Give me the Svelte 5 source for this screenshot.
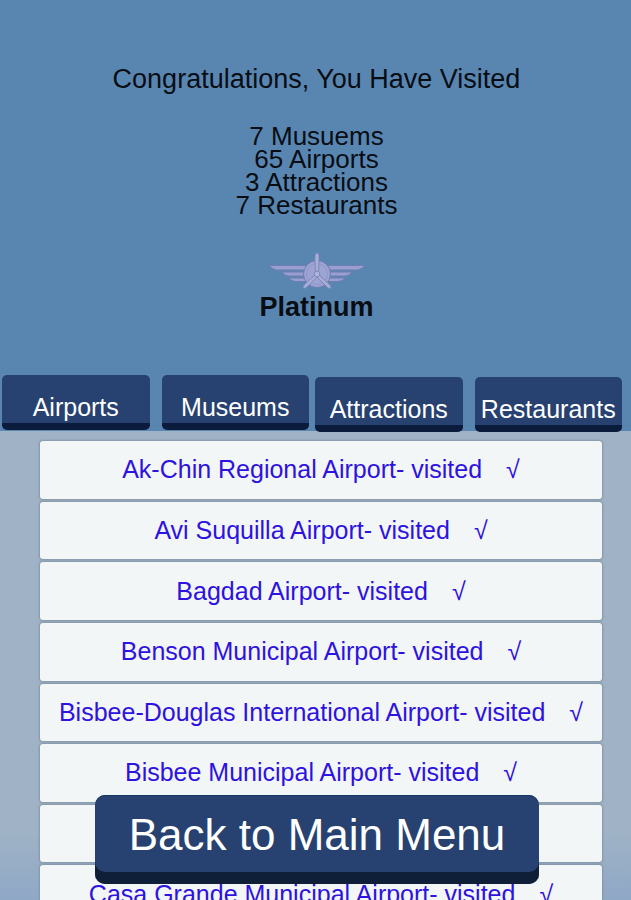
<script>
  const totals = ['7 Musuems', '65 Airports', '3 Attractions', '7 Restaurants'];
  const tabGroups = [
    ['Airports', 'Museums'],
    ['Attractions', 'Restaurants']
  ];
  const airports = [
    'Ak-Chin Regional Airport',
    'Avi Suquilla Airport',
    'Bagdad Airport',
    'Benson Municipal Airport',
    'Bisbee-Douglas International Airport',
    'Bisbee Municipal Airport',
    '',
    'Casa Grande Municipal Airport'
  ];
</script>

<main>
  <header>
    <h1>Congratulations, You Have Visited</h1>
    <ul class="totals">
      {#each totals as total}
        <li>{total}</li>
      {/each}
    </ul>
    <svg class="wings" viewBox="0 0 98 40" aria-hidden="true">
      <g fill="#999fd0" stroke="#6f7db0" stroke-width="1" stroke-linejoin="round">
        <path d="M1 13.5H38V18H8Q4 17 1 13.5Z" />
        <path d="M97 13.5H60V18H90Q94 17 97 13.5Z" />
        <path d="M14 20H38V24H20Q16 23 14 20Z" />
        <path d="M84 20H60V24H78Q82 23 84 20Z" />
        <path d="M21 26H40V29.5H27Q23 29 21 26Z" />
        <path d="M77 26H58V29.5H71Q75 29 77 26Z" />
        <circle cx="49" cy="22" r="13.5" fill="#9da3d3" />
        <circle cx="49" cy="22" r="10.5" fill="none" stroke="#8990c2" stroke-width=".6" />
        <path d="M47.5 20L47 10V4Q47 1 49 1Q51 1 51 4V10L50.500 20L52 24L61 32Q64 35 62.500 36.500Q60 37 57 33L49 25L41 33Q38 37 35.500 36.500Q34 35 37 32L46 24Z" fill="#a8add9" stroke="#7680b0" stroke-width=".8" />
        <circle cx="49" cy="22" r="2.800" fill="#b0b5e0" stroke="#7680b0" stroke-width=".8" />
      </g>
    </svg>
    <p class="rank">Platinum</p>
  </header>

  <nav aria-label="Categories">
    {#each tabGroups as group}
      <div class="group">
        {#each group as tab}
          <button type="button">{tab}</button>
        {/each}
      </div>
    {/each}
  </nav>

  <section>
    <ul class="places">
      {#each airports as airport}
        <li>
          {#if airport}
            <span>{airport}- visited</span><span>√</span>
          {/if}
        </li>
      {/each}
    </ul>
  </section>

  <button type="button" class="back">Back to Main Menu</button>
</main>

<style>
  :global(body) {
    margin: 0;
  }
  main {
    position: relative;
    display: flex;
    flex-direction: column;
    height: 100vh;
    overflow: hidden;
    background: #5986b1;
    color: #080d14;
    font-family: 'Liberation Sans', Arial, sans-serif;
    font-size: 26px;
  }
  header {
    display: flex;
    flex: none;
    flex-direction: column;
    align-items: center;
    box-sizing: border-box;
    height: 375px;
    padding: 64px 0 0 2px;
  }
  h1,
  p,
  ul {
    margin: 0;
    padding: 0;
    list-style: none;
  }
  h1 {
    font-size: 27px;
    font-weight: 400;
    line-height: 30px;
  }
  .totals {
    margin-top: 31px;
    line-height: 23px;
    text-align: center;
  }
  .wings {
    width: 98px;
    height: 40px;
    margin-top: 35px;
  }
  .rank {
    font-size: 27px;
    font-weight: 700;
    line-height: 30px;
  }
  nav {
    display: flex;
    flex: none;
    gap: 6px;
    height: 56px;
    padding: 0 9px 0 2px;
  }
  .group {
    display: flex;
    flex: 1;
    gap: 12px;
    height: 55px;
  }
  .group + .group {
    margin-top: 2px;
    z-index: 1;
  }
  button {
    border: 0;
    background: #274270;
    color: #fff;
    font-family: inherit;
  }
  .group button {
    flex: 1 1 0;
    min-width: 0;
    padding: 15px 0 0;
    border-bottom: 7px solid #0b1b3c;
    border-radius: 5px;
    font-size: 25px;
    line-height: 28px;
    white-space: nowrap;
  }
  section {
    flex: 1;
    min-height: 0;
    padding: 10px 29px 0 40px;
    background: linear-gradient(#a0b3c6 85%, #8fa8c6);
  }
  .places {
    display: flex;
    flex-direction: column;
    gap: 3px;
    height: 482px;
    font-size: 25px;
  }
  .places li {
    display: flex;
    flex: 1;
    align-items: center;
    justify-content: center;
    gap: 24px;
    border-radius: 3px;
    background: #f3f6f6;
    box-shadow: 0 0 2px 1px #8395a6;
    color: #2d12e0;
    white-space: nowrap;
  }
  .back {
    position: absolute;
    right: 92px;
    bottom: 16px;
    left: 95px;
    height: 89px;
    padding: 0 0 10px;
    border-radius: 10px;
    background: #274270;
    box-shadow: inset 0 -12px #101f38, inset 0 1px #173765;
    font-size: 44px;
    line-height: 52px;
  }
</style>
